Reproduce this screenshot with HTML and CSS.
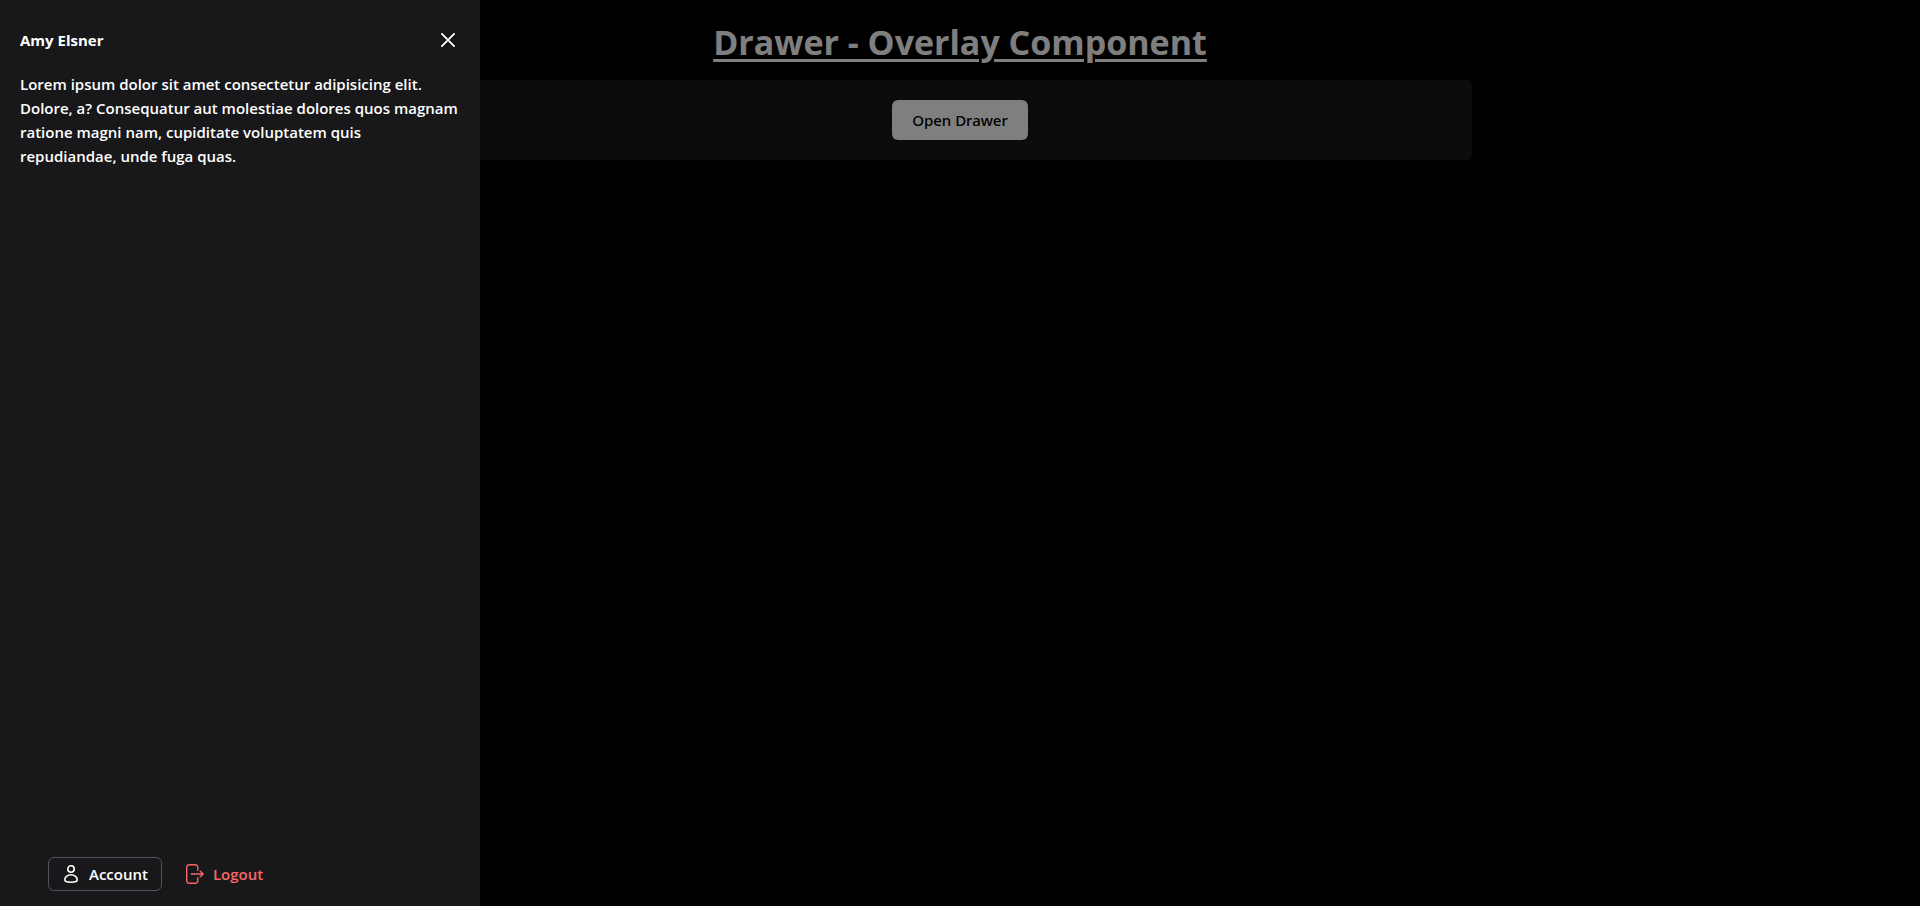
FILE: index.html
```html
<!DOCTYPE html>
<html lang="en">
<head>
<meta charset="utf-8">
<title>Drawer - Overlay Component</title>
<link rel="stylesheet" href="styles.css">
</head>
<body>
<main class="page">
  <h1 class="page-title">Drawer - Overlay Component</h1>
  <section class="card">
    <button class="open-button" type="button">Open Drawer</button>
  </section>
</main>
<div class="mask">
  <aside class="drawer" role="dialog" aria-labelledby="drawer-title">
    <header class="drawer-header">
      <h2 class="drawer-title" id="drawer-title">Amy Elsner</h2>
      <button class="close-button" type="button" aria-label="Close">
        <svg width="14" height="14" viewBox="0 0 14 14" fill="none" stroke="currentColor" stroke-width="1.8" stroke-linecap="round"><path d="M.9.9l12.200 12.200M13.100.9L.9 13.100"/></svg>
      </button>
    </header>
    <p class="drawer-content">Lorem ipsum dolor sit amet consectetur adipisicing elit. Dolore, a? Consequatur aut molestiae dolores quos magnam ratione magni nam, cupiditate voluptatem quis repudiandae, unde fuga quas.</p>
    <footer class="drawer-footer">
      <button class="action account" type="button">
        <svg width="18" height="18" viewBox="0 0 18 18" fill="none" stroke="currentColor" stroke-width="1.600"><circle cx="9" cy="4" r="3.200"/><path d="M9 9.800c3.700 0 6.200 2.300 6.200 4.900 0 1.800-2.700 2.500-6.200 2.500s-6.200-.7-6.200-2.500C2.800 12.100 5.300 9.800 9 9.800z"/></svg>
        Account
      </button>
      <button class="action logout" type="button">
        <svg width="18" height="20" viewBox="0 0 18 20" fill="none" stroke="currentColor" stroke-width="1.400" stroke-linecap="round" stroke-linejoin="round"><path d="M11.800 6.200V3.200a2.500 2.500 0 0 0-2.500-2.500H3.200A2.500 2.500 0 0 0 .7 3.200v13.600a2.500 2.500 0 0 0 2.500 2.500h6.100a2.500 2.500 0 0 0 2.500-2.500v-3M5.300 10h11.800M14.300 7.200l2.900 2.800-2.900 2.800"/></svg>
        Logout
      </button>
    </footer>
  </aside>
</div>
</body>
</html>
```

FILE: styles.css
```css
*, *::before, *::after {
  box-sizing: border-box;
}

body {
  margin: 0;
  background: #000;
  color: #fff;
  font-family: "Segoe UI", "Open Sans", "Noto Sans", sans-serif;
  font-size: 15px;
  line-height: 24px;
}

button {
  font: inherit;
  color: inherit;
  cursor: pointer;
}

.page {
  display: flex;
  flex-direction: column;
  gap: 20px;
  max-width: 1024px;
  margin: 0 auto;
  padding-top: 24px;
}

.page-title {
  margin: 0;
  font-size: 34px;
  line-height: 36px;
  font-weight: 700;
  text-align: center;
  text-decoration: underline 3px;
  text-underline-offset: 4px;
}

.card {
  display: flex;
  justify-content: center;
  padding: 20px;
  border-radius: 6px;
  background: #18181b;
}

.open-button {
  height: 40px;
  padding: 0 20px;
  border: 0;
  border-radius: 6px;
  background: #fff;
  color: #000;
  font-family: "Segoe UI", "Noto Sans", sans-serif;
  font-weight: 500;
}

.mask {
  position: fixed;
  inset: 0;
  display: flex;
  background: rgba(0, 0, 0, 0.5);
}

.drawer {
  display: flex;
  flex-direction: column;
  width: 480px;
  max-width: 100%;
  background: #18181b;
}

.drawer-header {
  display: flex;
  align-items: center;
  justify-content: space-between;
  padding: 20px 20px 12px;
}

.drawer-title {
  margin: 0;
  font-size: 15px;
  font-weight: 700;
}

.close-button {
  display: grid;
  place-items: center;
  width: 24px;
  height: 40px;
  padding: 0;
  border: 0;
  background: none;
}

.drawer-content {
  flex: 1;
  margin: 0;
  padding: 0 20px;
  font-weight: 600;
}

.drawer-footer {
  display: flex;
  gap: 10px;
  padding: 0 48px 15px;
}

.action {
  display: flex;
  align-items: center;
  gap: 9px;
  height: 34px;
  padding: 0 13px;
  border: 1px solid transparent;
  border-radius: 6px;
  background: none;
  font-weight: 600;
}

.account {
  border-color: #52525b;
}

.logout {
  color: #f86767;
}
```
